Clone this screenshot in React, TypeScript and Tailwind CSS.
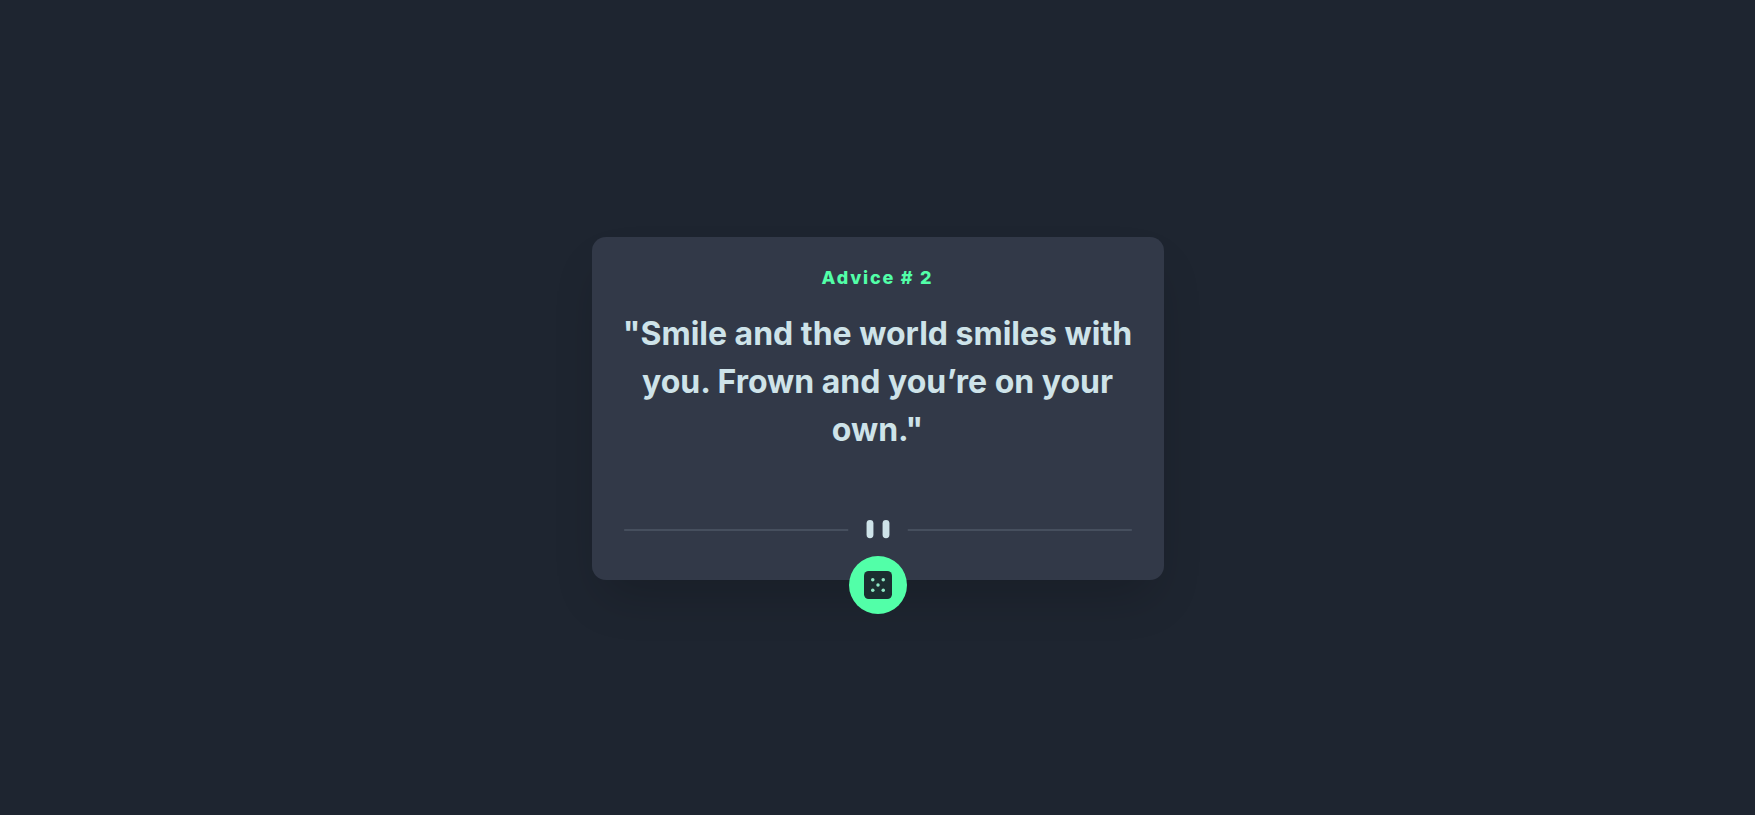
function Divider() {
  return (
    <svg className="mt-[66px] block w-full" viewBox="0 0 444 16" aria-hidden="true">
      <path fill="#464F5E" d="M0 7.9h196v1.75H0zM248 7.9h196v1.75H248z" />
      <g transform="translate(212)" fill="#CEE3E9">
        <rect width="6" height="16" rx="3" />
        <rect x="14" width="6" height="16" rx="3" />
      </g>
    </svg>
  );
}

function DiceIcon() {
  return (
    <svg className="size-7" viewBox="0 0 24 24" aria-hidden="true">
      <rect width="24" height="24" rx="4" fill="#1B2E30" />
      <g fill="#8FE8C4">
        <circle cx="7.5" cy="7.5" r="1.5" />
        <circle cx="16.5" cy="7.5" r="1.5" />
        <circle cx="12" cy="12" r="1.5" />
        <circle cx="7.5" cy="16.5" r="1.5" />
        <circle cx="16.5" cy="16.5" r="1.5" />
      </g>
    </svg>
  );
}

export default function App() {
  return (
    <main className="flex min-h-screen items-center justify-center bg-[#1e2530] pt-0.5 font-['Inter',sans-serif]">
      <section className="relative w-full max-w-[572px] rounded-[14px] bg-[#323948] px-8 pt-[27px] pb-[41px] text-center shadow-2xl shadow-black/20">
        <h1 className="text-lg font-extrabold tracking-widest text-[#52ffa8]">Advice # 2</h1>
        <p className="-mx-1 mt-[18px] text-[32px] leading-12 font-bold text-[#cee3e9]">
          "Smile and the world smiles with you. Frown and you’re on your own."
        </p>
        <Divider />
        <button
          type="button"
          aria-label="New advice"
          className="absolute -bottom-[34px] left-1/2 flex size-[58px] -translate-x-1/2 cursor-pointer items-center justify-center rounded-full bg-[#52ffa8]"
        >
          <DiceIcon />
        </button>
      </section>
    </main>
  );
}
